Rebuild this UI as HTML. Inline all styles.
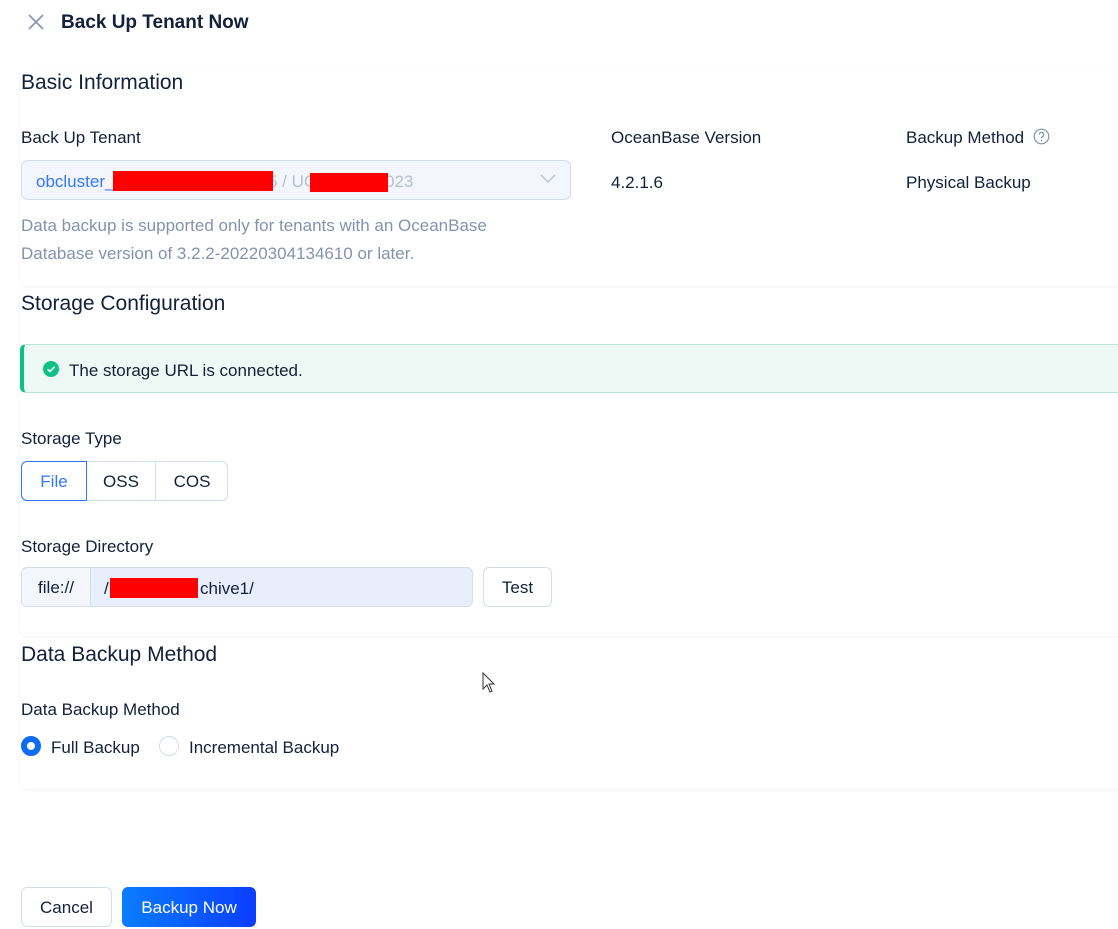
<!DOCTYPE html>
<html><head><style>
*{box-sizing:border-box;margin:0;padding:0}
body{width:1118px;height:929px;background:#fff;font-family:"Liberation Sans",sans-serif;color:#132039;position:relative;overflow:hidden;font-size:17px}
.a{position:absolute;white-space:nowrap}
.card{position:absolute;left:20px;right:-10px;background:#fff;border-radius:8px;box-shadow:0 1px 3px rgba(0,0,0,0.05)}
h2{font-size:21px;font-weight:normal;color:#132039}
.lbl{font-size:17px;color:#132039}
.red{position:absolute;background:#f00}
</style></head><body>
<svg class="a" style="left:27px;top:13px" width="18" height="18" viewBox="0 0 18 18"><path d="M2 2L16 16M16 2L2 16" stroke="#8592ad" stroke-width="1.6"/></svg>
<div class="a" style="left:61px;top:12px;font-size:19px;font-weight:bold;color:#132039">Back Up Tenant Now</div>

<div class="card" style="top:66px;height:220px"></div>
<div class="a" style="left:21px;top:71px"><h2>Basic Information</h2></div>
<div class="a lbl" style="left:21px;top:128px">Back Up Tenant</div>
<div class="a lbl" style="left:611px;top:128px">OceanBase Version</div>
<div class="a lbl" style="left:906px;top:128px">Backup Method</div>
<svg class="a" style="left:1033px;top:128px" width="17" height="17" viewBox="0 0 17 17"><circle cx="8.5" cy="8.5" r="7.3" fill="none" stroke="#8592ad" stroke-width="1.2"/><path d="M6.3 6.6a2.2 2.2 0 1 1 2.9 2.1c-.5.2-.7.5-.7 1.1v.6" fill="none" stroke="#8592ad" stroke-width="1.2"/><circle cx="8.5" cy="12.4" r=".8" fill="#8592ad"/></svg>
<div class="a" style="left:21px;top:160px;width:550px;height:40px;background:#f3f6fc;border:1px solid #d5dcea;border-radius:6px"></div>
<div class="a" style="left:36px;top:172px;color:#3377ff">obcluster_</div>
<div class="a" style="left:268px;top:172px;color:#b5bfd2">5 / UC</div>
<div class="a" style="left:385px;top:172px;color:#b5bfd2">023</div>
<div class="red" style="left:113px;top:171px;width:160px;height:20px"></div>
<div class="red" style="left:310px;top:173px;width:78px;height:19px"></div>
<svg class="a" style="left:540px;top:173px" width="16" height="12" viewBox="0 0 16 12"><path d="M1 2L8 9L15 2" fill="none" stroke="#b5bfd2" stroke-width="1.3"/></svg>
<div class="a" style="left:611px;top:173px">4.2.1.6</div>
<div class="a" style="left:906px;top:173px">Physical Backup</div>
<div class="a" style="left:21px;top:212px;color:#8592ad;line-height:28px">Data backup is supported only for tenants with an OceanBase<br>Database version of 3.2.2-20220304134610 or later.</div>

<div class="card" style="top:288px;height:348px"></div>
<div class="a" style="left:21px;top:292px"><h2>Storage Configuration</h2></div>
<div class="a" style="left:20px;top:344px;width:1110px;height:49px;background:#eef8f4;border:1px solid #b5e6d1;border-left:4px solid #0ac185;border-radius:6px"></div>
<svg class="a" style="left:42px;top:360px" width="18" height="18" viewBox="0 0 18 18"><circle cx="9" cy="9" r="8" fill="#0ac185"/><path d="M5.5 9.2L8 11.5L12.5 6.8" fill="none" stroke="#fff" stroke-width="1.6"/></svg>
<div class="a" style="left:69px;top:361px">The storage URL is connected.</div>
<div class="a lbl" style="left:21px;top:429px">Storage Type</div>
<div class="a" style="left:21px;top:461px;width:207px;height:40px;border:1px solid #d5dcea;border-radius:6px"></div>
<div class="a" style="left:21px;top:461px;width:66px;height:40px;border:1px solid #3377ff;border-radius:6px 0 0 6px;color:#3377ff;text-align:center;line-height:40px">File</div>
<div class="a" style="left:155px;top:462px;width:1px;height:38px;background:#d5dcea"></div>
<div class="a" style="left:87px;top:472px;width:68px;text-align:center">OSS</div>
<div class="a" style="left:156px;top:472px;width:72px;text-align:center">COS</div>
<div class="a lbl" style="left:21px;top:537px">Storage Directory</div>
<div class="a" style="left:21px;top:567px;width:452px;height:40px;border:1px solid #d5dcea;border-radius:6px;background:#e8eefb;overflow:hidden"><div style="width:69px;height:38px;background:#f3f6fc;border-right:1px solid #d5dcea;text-align:center;line-height:40px">file://</div></div>
<div class="a" style="left:104px;top:579px">/</div>
<div class="red" style="left:110px;top:578px;width:88px;height:20px"></div>
<div class="a" style="left:200px;top:579px">chive1/</div>
<div class="a" style="left:483px;top:567px;width:69px;height:40px;border:1px solid #d5dcea;border-radius:6px;text-align:center;line-height:40px">Test</div>

<div class="card" style="top:638px;height:151px"></div>
<div class="a" style="left:21px;top:643px"><h2>Data Backup Method</h2></div>
<svg class="a" style="left:482px;top:672px" width="14" height="21" viewBox="0 0 14 21"><path d="M1 1V17L5 13L8 20L10 19L7 12H12Z" fill="#fff" stroke="#333" stroke-width="1"/></svg>
<div class="a lbl" style="left:21px;top:700px">Data Backup Method</div>
<div class="a" style="left:21px;top:736px;width:20px;height:20px;border-radius:50%;border:6px solid #0d6cf2;background:#fff"></div>
<div class="a" style="left:51px;top:738px">Full Backup</div>
<div class="a" style="left:159px;top:736px;width:20px;height:20px;border-radius:50%;border:1px solid #d5dcea"></div>
<div class="a" style="left:189px;top:738px">Incremental Backup</div>

<div class="a" style="left:21px;top:887px;width:91px;height:40px;border:1px solid #d5dcea;border-radius:6px;text-align:center;line-height:40px;color:#132039">Cancel</div>
<div class="a" style="left:122px;top:887px;width:134px;height:40px;border-radius:6px;background:linear-gradient(90deg,#0a7dff,#0b3dff);color:#fff;text-align:center;line-height:42px">Backup Now</div>
</body></html>
